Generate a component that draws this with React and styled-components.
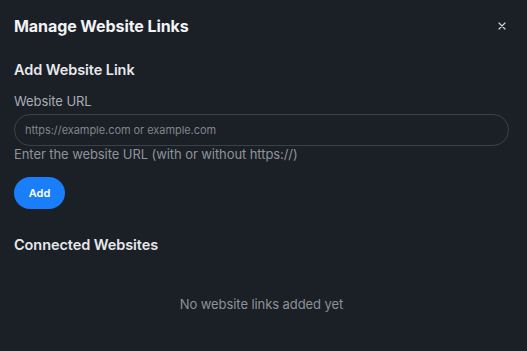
import React from 'react';
import styled, { createGlobalStyle } from 'styled-components';

const Global = createGlobalStyle`
  html, body {
    margin: 0;
    padding: 0;
    background: #1b1f26;
  }
  body {
    font-family: Inter, "Noto Sans", sans-serif;
    color: #e8e9eb;
    letter-spacing: -0.005em;
  }
`

const Modal = styled.div`
  width: 527px;
  height: 351px;
  box-sizing: border-box;
  padding: 0 18px 0 14px;
  background: #1b1f26;
  display: flex;
  flex-direction: column;
`

const Header = styled.div`
  display: flex;
  align-items: center;
  justify-content: space-between;
  height: 52px;
`

const Title = styled.h2`
  margin: 0;
  font-size: 16px;
  font-weight: 700;
  color: #f2f3f5;
`

const CloseButton = styled.button`
  background: none;
  border: none;
  padding: 0;
  width: 14px;
  height: 14px;
  display: flex;
  align-items: center;
  justify-content: center;
  color: #d0d3d8;
  cursor: pointer;
`

const SectionTitle = styled.h3`
  margin: ${p => p.$top}px 0 0;
  font-size: 14.5px;
  font-weight: 600;
  color: #e6e8eb;
  line-height: 18px;
`

const Label = styled.label`
  display: block;
  margin-top: 14px;
  font-size: 13px;
  color: #a9adb4;
  line-height: 16px;
`

const Input = styled.input`
  box-sizing: border-box;
  margin-top: 5px;
  width: 495px;
  height: 32px;
  border: 1px solid #3b4049;
  border-radius: 16px;
  background: transparent;
  padding: 0 10px;
  font-family: inherit;
  letter-spacing: -0.005em;
  font-size: 11px;
  color: #e6e8eb;
  outline: none;
  &::placeholder {
    color: #80858d;
  }
`

const Help = styled.p`
  margin: 0;
  font-size: 13px;
  line-height: 17px;
  color: #8f939a;
`

const AddButton = styled.button`
  margin-top: 14px;
  width: 51px;
  height: 32px;
  border: none;
  border-radius: 16px;
  background: #1a7dfa;
  color: #fff;
  font-family: inherit;
  letter-spacing: 0;
  font-size: 11px;
  font-weight: 600;
  cursor: pointer;
`

const Empty = styled.div`
  margin-top: 42px;
  text-align: center;
  font-size: 13px;
  color: #8d9198;
`

export default function App() {
  return (
    <>
      <Global />
      <Modal>
        <Header>
          <Title>Manage Website Links</Title>
          <CloseButton aria-label="Close">
            <svg width="8" height="8" viewBox="0 0 8 8">
              <path d="M1 1L7 7M7 1L1 7" stroke="currentColor" strokeWidth="1.2" strokeLinecap="round" />
            </svg>
          </CloseButton>
        </Header>
        <SectionTitle $top={9}>Add Website Link</SectionTitle>
        <Label>Website URL</Label>
        <Input placeholder="https://example.com or example.com" />
        <Help>Enter the website URL (with or without https://)</Help>
        <div>
          <AddButton>Add</AddButton>
        </div>
        <SectionTitle $top={27}>Connected Websites</SectionTitle>
        <Empty>No website links added yet</Empty>
      </Modal>
    </>
  );
}
